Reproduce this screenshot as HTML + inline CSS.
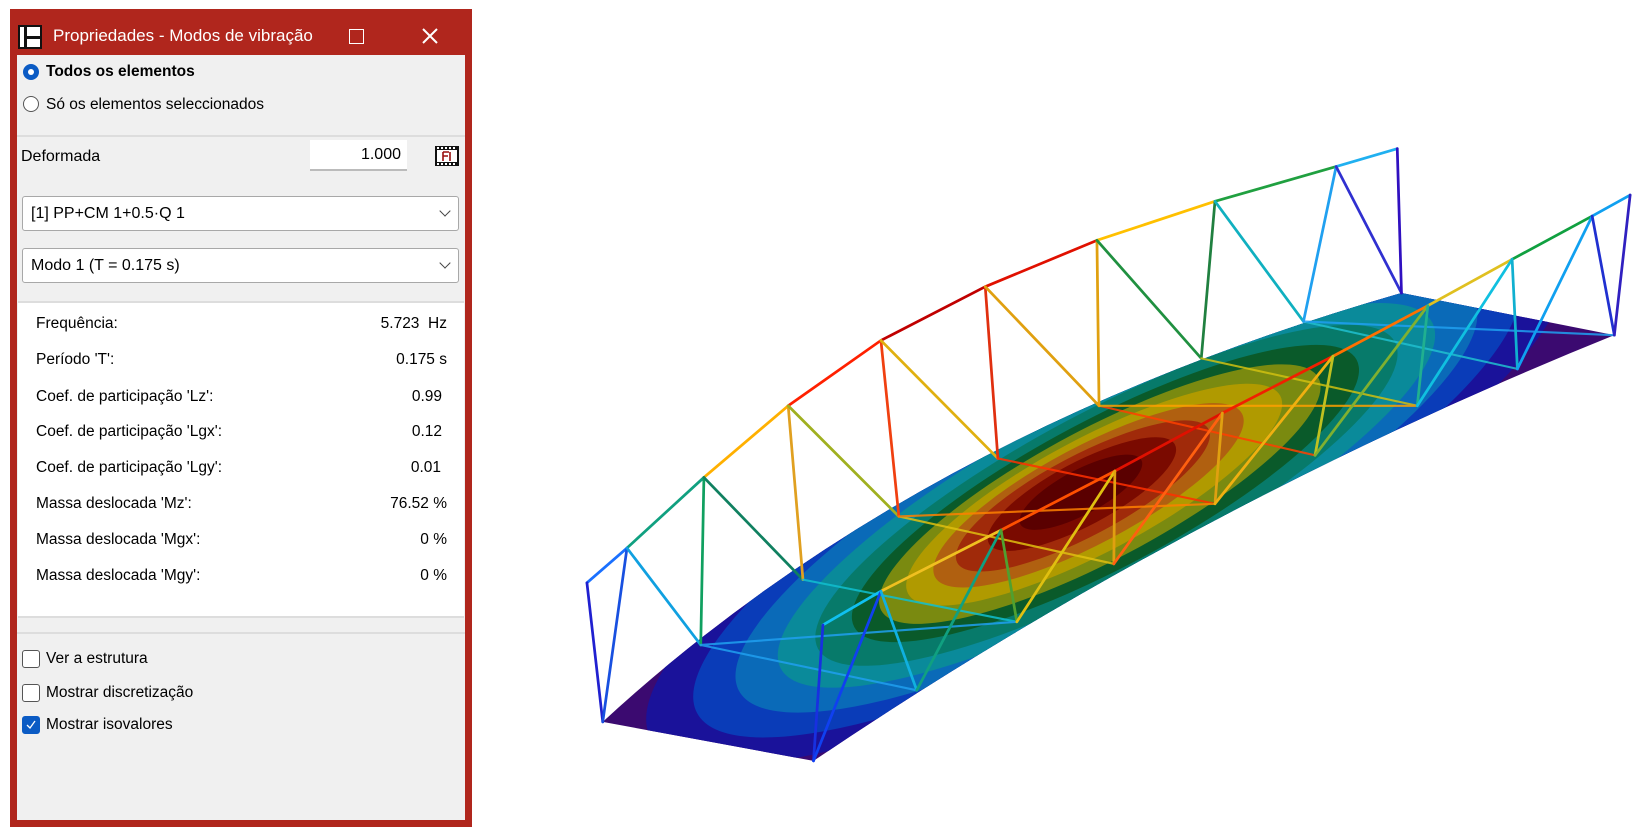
<!DOCTYPE html>
<html><head><meta charset="utf-8"><style>
body{margin:0;width:1647px;height:840px;background:#fff;position:relative;overflow:hidden;font-family:"Segoe UI","Liberation Sans",sans-serif;color:#000}
.win{position:absolute;left:10px;top:9px;width:462px;height:818px;background:#b0261d;}
.tb{position:absolute;left:0;top:0;width:462px;height:46px;color:#fff;font-size:17px}
.content{position:absolute;left:7px;top:46px;width:448px;height:765px;background:#f0f0f0}
.a{position:absolute;font-size:15.5px;white-space:nowrap;line-height:20px}
.radio{position:absolute;width:16px;height:16px;border-radius:50%;box-sizing:border-box}
.cb{position:absolute;left:5px;width:18px;height:18px;border:1.5px solid #555;border-radius:3px;box-sizing:border-box;background:#fff}
.combo{position:absolute;left:5px;width:437px;height:35px;background:#fff;border:1px solid #a8a8a8;border-radius:3px;box-sizing:border-box}
.combo span{position:absolute;left:8px;top:7px;font-size:16px;line-height:20px}
.combo i{position:absolute;right:9px;top:10px;width:7px;height:7px;border-right:1.3px solid #444;border-bottom:1.3px solid #444;transform:rotate(45deg)}
.info{position:absolute;left:1px;top:246px;width:446px;height:313px;background:#fff;border-top:2px solid #ddd;border-bottom:2px solid #ddd}
.row{position:absolute;left:18px;right:17px;font-size:15.5px;height:20px;line-height:20px}
.row b{font-weight:normal;position:absolute;right:0}
</style></head><body>
<div class="win">
 <div class="tb">
  <svg style="position:absolute;left:8px;top:16px" width="24" height="24" viewBox="0 0 24 24"><rect x="1" y="1" width="22" height="22" fill="#fff" stroke="#111" stroke-width="2"/><rect x="6" y="1" width="3" height="22" fill="#111"/><rect x="9" y="11" width="14" height="3" fill="#111"/><rect x="2" y="2" width="4" height="20" fill="#fff"/></svg>
  <div style="position:absolute;left:43px;top:16px;width:278px;overflow:hidden;white-space:nowrap;line-height:22px">Propriedades - Modos de vibração</div>
  <div style="position:absolute;left:339px;top:20px;width:13px;height:13px;border:1.6px solid #fff"></div>
  <svg style="position:absolute;left:411px;top:18px" width="18" height="18"><path d="M2 2L16 16M16 2L2 16" stroke="#fff" stroke-width="2"/></svg>
 </div>
 <div class="content">
  <div class="radio" style="left:6px;top:9px;background:#0b5bc4"><div style="position:absolute;left:5px;top:5px;width:6px;height:6px;border-radius:50%;background:#fff"></div></div>
  <div class="a" style="left:29px;top:7px;font-weight:bold">Todos os elementos</div>
  <div class="radio" style="left:6px;top:41px;border:1.5px solid #555;background:#fff"></div>
  <div class="a" style="left:29px;top:40px">Só os elementos seleccionados</div>
  <div style="position:absolute;left:0;right:0;top:80px;height:2px;background:#ddd"></div>
  <div class="a" style="left:4px;top:92px;font-size:16px">Deformada</div>
  <div style="position:absolute;left:293px;top:85px;width:97px;height:31px;background:#fff;border-bottom:2px solid #bbb;box-sizing:border-box"><span style="position:absolute;right:6px;top:5px;font-size:16px;line-height:20px">1.000</span></div>
  <svg style="position:absolute;left:418px;top:91px" width="24" height="20" viewBox="0 0 24 20"><rect x="0" y="0" width="24" height="20" fill="#111"/><rect x="2" y="4" width="20" height="12" fill="#fff"/><g fill="#fff"><rect x="2" y="1" width="2" height="2"/><rect x="6" y="1" width="2" height="2"/><rect x="10" y="1" width="2" height="2"/><rect x="14" y="1" width="2" height="2"/><rect x="18" y="1" width="2" height="2"/><rect x="2" y="17" width="2" height="2"/><rect x="6" y="17" width="2" height="2"/><rect x="10" y="17" width="2" height="2"/><rect x="14" y="17" width="2" height="2"/><rect x="18" y="17" width="2" height="2"/></g><path d="M8 6V15M8 6H14M8 10H13M15 6V15" stroke="#9a1010" stroke-width="1.6" fill="none"/></svg>
  <div class="combo" style="top:141px"><span>[1] PP+CM 1+0.5·Q 1</span><i></i></div>
  <div class="combo" style="top:193px"><span>Modo 1 (T = 0.175 s)</span><i></i></div>
  <div class="info">
   <div class="row" style="top:11px">Frequência:<b>5.723&nbsp; Hz</b></div>
   <div class="row" style="top:47px">Período 'T':<b>0.175 s</b></div>
   <div class="row" style="top:84px">Coef. de participação 'Lz':<b style="right:5px">0.99</b></div>
   <div class="row" style="top:119px">Coef. de participação 'Lgx':<b style="right:5px">0.12</b></div>
   <div class="row" style="top:155px">Coef. de participação 'Lgy':<b style="right:6px">0.01</b></div>
   <div class="row" style="top:191px">Massa deslocada 'Mz':<b>76.52 %</b></div>
   <div class="row" style="top:227px">Massa deslocada 'Mgx':<b>0 %</b></div>
   <div class="row" style="top:263px">Massa deslocada 'Mgy':<b>0 %</b></div>
  </div>
  <div style="position:absolute;left:0;right:0;top:577px;height:2px;background:#ddd"></div>
  <div class="cb" style="top:595px"></div><div class="a" style="left:29px;top:594px">Ver a estrutura</div>
  <div class="cb" style="top:629px"></div><div class="a" style="left:29px;top:628px">Mostrar discretização</div>
  <div class="cb" style="top:661px;background:#0b5bc4;border-color:#0b5bc4"><svg width="15" height="15" style="position:absolute;left:0;top:0"><path d="M4 8L7 11L12 4" stroke="#fff" stroke-width="1.3" fill="none"/></svg></div><div class="a" style="left:29px;top:660px">Mostrar isovalores</div>
 </div>
</div>
<svg style="position:absolute;left:0;top:0;display:block" width="1647" height="840" viewBox="0 0 1563 797">
<defs><clipPath id="dk"><path d="M572,685 Q870,410 1330,278 L1532,318 Q1130,480 772,722 Z"/></clipPath></defs>
<path d="M572,685 Q870,410 1330,278 L1532,318 Q1130,480 772,722 Z" fill="#3b0a70"/>
<g clip-path="url(#dk)"><g transform="rotate(-28 1050 470)">
<ellipse cx="1050" cy="470" rx="490" ry="128" fill="#1a129a"/>
<ellipse cx="1050" cy="470" rx="440" ry="114" fill="#0a3cb8"/>
<ellipse cx="1050" cy="470" rx="395" ry="102" fill="#0a6ab8"/>
<ellipse cx="1050" cy="470" rx="350" ry="90" fill="#0a8a9a"/>
<ellipse cx="1050" cy="470" rx="310" ry="80" fill="#077a6a"/>
<ellipse cx="1050" cy="468" rx="270" ry="70" fill="#0a5a2a"/>
<ellipse cx="1045" cy="466" rx="235" ry="62" fill="#7a8a10"/>
<ellipse cx="1040" cy="464" rx="200" ry="54" fill="#b09a00"/>
<ellipse cx="1035" cy="462" rx="165" ry="46" fill="#b06010"/>
<ellipse cx="1030" cy="460" rx="135" ry="38" fill="#a02a0a"/>
<ellipse cx="1030" cy="458" rx="100" ry="30" fill="#7a0a00"/>
<ellipse cx="1030" cy="456" rx="65" ry="21" fill="#5a0000"/>
</g></g>
<g stroke-width="2.6" fill="none" stroke-linecap="round">
<path d="M557,553L595,520" stroke="#1a70ff"/><path d="M595,520L668,453" stroke="#10a080"/><path d="M668,453L748,385" stroke="#ffb000"/><path d="M748,385L836,323" stroke="#ff2000"/><path d="M836,323L935,272" stroke="#c00000"/><path d="M935,272L1041,228" stroke="#e01000"/><path d="M1041,228L1153,191" stroke="#ffc000"/><path d="M1153,191L1268,158" stroke="#20a040"/><path d="M1268,158L1326,141" stroke="#20b0f0"/>
<path d="M557,553L572,685" stroke="#2020d0"/><path d="M595,520L572,685" stroke="#1850e0"/><path d="M595,520L665,612" stroke="#10a0e0"/>
<path d="M668,453L665,612" stroke="#10a060"/><path d="M668,453L762,550" stroke="#108060"/>
<path d="M748,385L762,550" stroke="#e0a020"/><path d="M748,385L853,490" stroke="#a0b020"/>
<path d="M836,323L853,490" stroke="#f04010"/><path d="M836,323L947,435" stroke="#e0b010"/>
<path d="M935,272L947,435" stroke="#e03010"/><path d="M935,272L1043,385" stroke="#e0a010"/>
<path d="M1041,228L1043,385" stroke="#e0a010"/><path d="M1041,228L1140,340" stroke="#209040"/>
<path d="M1153,191L1140,340" stroke="#208040"/><path d="M1153,191L1237,305" stroke="#10b0c0"/>
<path d="M1268,158L1237,305" stroke="#20a0f0"/><path d="M1268,158L1330,278" stroke="#3030d0"/>
<path d="M1326,141L1330,278" stroke="#3010c0"/>
<g stroke-width="2" opacity="0.85">
<path d="M665,612L870,655" stroke="#20a0f0"/><path d="M762,550L965,590" stroke="#10c0d0"/><path d="M853,490L1057,535" stroke="#e0c010"/><path d="M947,435L1153,478" stroke="#ff3000"/><path d="M1043,385L1248,432" stroke="#ff4000"/><path d="M1140,340L1345,385" stroke="#d0c010"/><path d="M1237,305L1440,350" stroke="#20c0d0"/>
<path d="M665,612L965,590" stroke="#20a0f0"/><path d="M853,490L1153,478" stroke="#ff8000"/><path d="M1043,385L1345,385" stroke="#ffa000"/><path d="M1237,305L1532,318" stroke="#20a0f0"/>
</g>
<path d="M781,593L836,561" stroke="#10c0f0"/><path d="M836,561L950,503" stroke="#f0c020"/><path d="M950,503L1058,447" stroke="#ff5000"/><path d="M1058,447L1160,392" stroke="#e01000"/><path d="M1160,392L1265,338" stroke="#f02000"/><path d="M1265,338L1355,290" stroke="#ff7000"/><path d="M1355,290L1435,246" stroke="#e0c020"/><path d="M1435,246L1511,205" stroke="#10a040"/><path d="M1511,205L1547,185" stroke="#10a0f0"/>
<path d="M781,593L772,722" stroke="#1830e0"/><path d="M836,561L772,722" stroke="#1040f0"/><path d="M836,561L870,655" stroke="#10b0e0"/>
<path d="M950,503L870,655" stroke="#10a080"/><path d="M950,503L965,590" stroke="#50a030"/>
<path d="M1058,447L965,590" stroke="#e0c010"/><path d="M1058,447L1057,535" stroke="#e0a010"/>
<path d="M1160,392L1057,535" stroke="#ff6010"/><path d="M1160,392L1153,478" stroke="#e0a010"/>
<path d="M1265,338L1153,478" stroke="#f0b010"/><path d="M1265,338L1248,432" stroke="#c0c020"/>
<path d="M1355,290L1248,432" stroke="#80b030"/><path d="M1355,290L1345,385" stroke="#20b090"/>
<path d="M1435,246L1345,385" stroke="#10c0e0"/><path d="M1435,246L1440,350" stroke="#10b0d0"/>
<path d="M1511,205L1440,350" stroke="#10a0f0"/><path d="M1511,205L1532,318" stroke="#2030d0"/>
<path d="M1547,185L1532,318" stroke="#3020c0"/>
</g>
</svg>
</body></html>
